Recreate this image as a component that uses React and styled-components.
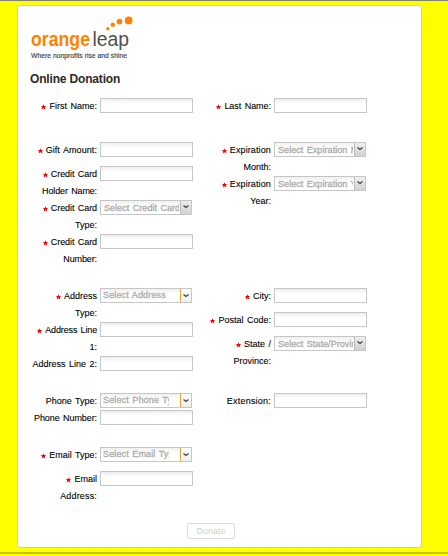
import React from "react";
import styled, { createGlobalStyle } from "styled-components";

const GlobalStyle = createGlobalStyle`
  * { box-sizing: border-box; }
  body {
    margin: 0;
    background: #ffff00;
    font-family: "Liberation Sans", Arial, sans-serif;
  }
`;

const Page = styled.div`
  height: 556px;
  padding: 4px 0 0 17px;
  border-top: 1px solid #808080;
  overflow: hidden;
`;

const Card = styled.main`
  width: 405px;
  height: 543px;
  padding: 0 11px 0 12px;
  background: #fff;
  border: 1px solid #ccc;
  border-radius: 4px;
`;

const BottomRule = styled.div`
  height: 2px;
  margin: 4px 0 0 -17px;
  background: #c4c400;
`;

const Logo = styled.svg`
  display: block;
  width: 120px;
  height: 56px;
`;

const Title = styled.h1`
  height: 36px;
  margin: 0;
  padding-top: 9px;
  font-size: 12px;
  line-height: 16px;
  font-weight: bold;
  color: #2a2a2a;
  letter-spacing: -0.17px;
`;

const Section = styled.section`
  display: grid;
  grid-template-columns: 174px 174px;
  height: ${(p) => p.$height}px;
`;

const Field = styled.div`
  display: flex;
  align-items: flex-start;
  gap: 3px;
  height: ${(p) => p.$height}px;
`;

const Label = styled.label`
  width: 67px;
  display: flex;
  flex-direction: column;
  align-items: flex-end;
  font-size: 9px;
  line-height: 17px;
  color: #000;
  white-space: nowrap;
  word-spacing: 1px;
  -webkit-text-stroke: 0.1px #000;
`;

const LabelLine = styled.span`
  display: flex;
  align-items: center;
  gap: 3px;
  height: 17px;
  letter-spacing: ${(p) => p.$tracking}px;
`;

const Input = styled.input`
  width: 93px;
  height: 15px;
  padding: 0 3px;
  border: 1px solid #c6c6c6;
  border-radius: 0;
  outline: none;
  background: linear-gradient(#eeeeee, #ffffff 5px);
  font: 9px "Liberation Sans", Arial, sans-serif;
`;

const Select = styled.button`
  display: flex;
  width: 92px;
  height: 15px;
  padding: 0;
  border: 1px solid #c6c6c6;
  background: linear-gradient(#f0f0f0, #ffffff 5px);
  text-align: left;
`;

const SelectText = styled.span`
  flex: 1;
  min-width: 0;
  height: 13px;
  margin-left: ${(p) => (p.$accent ? 2 : 3)}px;
  margin-right: ${(p) => (p.$accent ? 11 : 1)}px;
  overflow: hidden;
  white-space: nowrap;
  font: 9px/${(p) => (p.$accent ? 12 : 14)}px "Liberation Sans", Arial, sans-serif;
  letter-spacing: ${(p) => (p.$accent ? 0.15 : 0.07)}px;
  word-spacing: 0.7px;
  color: #aaa;
  -webkit-text-stroke: 0.3px #aaa;
`;

const Arrow = styled.span`
  display: flex;
  flex: none;
  justify-content: center;
  align-items: flex-start;
  width: 11px;
  height: 13px;
  padding-top: ${(p) => (p.$accent ? 5 : 4)}px;
  border-left: 1px solid ${(p) => (p.$accent ? "#e8a735" : "#bbb")};
  background: ${(p) =>
    p.$accent ? "linear-gradient(#fff, #eee)" : "linear-gradient(#eee, #d2d2d2)"};
`;

const Actions = styled.footer`
  display: flex;
  padding-left: 157px;
`;

const DonateButton = styled.button`
  width: 48px;
  height: 16px;
  padding: 0;
  border: 1px solid #ddd;
  border-radius: 2px;
  background: #fff;
  color: #d2d2d2;
  font: 9px/14px "Liberation Sans", Arial, sans-serif;
  letter-spacing: 0;
`;

const Star = () => (
  <svg width="5" height="6" viewBox="0 0 5 6">
    <path d="M2.5 .2 3.2 2H5L3.8 3.4 4.4 5.5 2.5 4.3 .6 5.5 1.2 3.4 0 2H1.8Z" fill="#f00" />
  </svg>
);

const tracking = {
  "Gift Amount:": 0.07,
  "Credit Card": -0.08,
  "Holder Name:": -0.13,
  "Number:": -0.12,
  "Expiration": 0.12,
  "Extension:": 0.22,
  "Address Line": -0.15,
  "Address:": 0.16,
  "Phone Number:": -0.08,
  "Last Name:": -0.04,
};

const fieldHeight = ({ lines, required }) =>
  lines.length > 1 ? 34 : required ? 24 : 17;

function FormField({ field }) {
  const { lines, required, select, accent } = field;
  return (
    <Field $height={fieldHeight(field)}>
      <Label>
        {lines.map((line, i) => (
          <LabelLine key={line} $tracking={tracking[line] || 0}>
            {required && i === 0 && <Star />}
            {line}
          </LabelLine>
        ))}
      </Label>
      {select ? (
        <Select type="button">
          <SelectText $accent={accent}>{select}</SelectText>
          <Arrow $accent={accent}>
            <svg width="6" height="4" viewBox="0 0 6 4">
              <path d="M.5 .5 3 2.5 5.5 .5" fill="none" stroke="#444" strokeWidth="1.3" />
            </svg>
          </Arrow>
        </Select>
      ) : (
        <Input aria-label={lines.join(" ")} />
      )}
    </Field>
  );
}

const sections = [
  {
    height: 44,
    left: [{ lines: ["First Name:"], required: true }],
    right: [{ lines: ["Last Name:"], required: true }],
  },
  {
    height: 146,
    left: [
      { lines: ["Gift Amount:"], required: true },
      { lines: ["Credit Card", "Holder Name:"], required: true },
      { lines: ["Credit Card", "Type:"], required: true, select: "Select Credit Card" },
      { lines: ["Credit Card", "Number:"], required: true },
    ],
    right: [
      { lines: ["Expiration", "Month:"], required: true, select: "Select Expiration Month" },
      { lines: ["Expiration", "Year:"], required: true, select: "Select Expiration Year" },
    ],
  },
  {
    height: 105,
    left: [
      { lines: ["Address", "Type:"], required: true, select: "Select Address", accent: true },
      { lines: ["Address Line", "1:"], required: true },
      { lines: ["Address Line 2:"] },
    ],
    right: [
      { lines: ["City:"], required: true },
      { lines: ["Postal Code:"], required: true },
      { lines: ["State /", "Province:"], required: true, select: "Select State/Province" },
    ],
  },
  {
    height: 54,
    left: [
      { lines: ["Phone Type:"], select: "Select Phone Type", accent: true },
      { lines: ["Phone Number:"] },
    ],
    right: [{ lines: ["Extension:"] }],
  },
  {
    height: 76,
    left: [
      { lines: ["Email Type:"], required: true, select: "Select Email Type", accent: true },
      { lines: ["Email", "Address:"], required: true },
    ],
    right: [],
  },
];

export default function App() {
  return (
    <>
      <GlobalStyle />
      <Page>
        <Card>
          <Logo viewBox="30 6 120 56">
            <g fontFamily="Liberation Sans, Arial, sans-serif">
              <text x="31" y="45.5" fontSize="19.5" fontWeight="bold" fill="#ff8200" textLength="59" lengthAdjust="spacingAndGlyphs">orange</text>
              <text x="92.5" y="45.5" fontSize="20" fill="#505050" textLength="36.5" lengthAdjust="spacingAndGlyphs">leap</text>
              <text x="31" y="58" fontSize="6.8" fill="#444" stroke="#444" strokeWidth="0.15" textLength="96" lengthAdjust="spacingAndGlyphs">Where nonprofits rise and shine</text>
            </g>
            <g fill="#ff8200">
              <circle cx="107.8" cy="28.8" r="1.7" />
              <circle cx="112.8" cy="24.8" r="2.2" />
              <circle cx="119.5" cy="21.6" r="2.9" />
              <circle cx="128.7" cy="20.4" r="3.9" />
            </g>
          </Logo>
          <Title>Online Donation</Title>
          {sections.map((s, i) => (
            <Section key={i} $height={s.height}>
              <div>{s.left.map((f, j) => <FormField key={j} field={f} />)}</div>
              <div>{s.right.map((f, j) => <FormField key={j} field={f} />)}</div>
            </Section>
          ))}
          <Actions>
            <DonateButton type="button" disabled>Donate</DonateButton>
          </Actions>
        </Card>
        <BottomRule />
      </Page>
    </>
  );
}
